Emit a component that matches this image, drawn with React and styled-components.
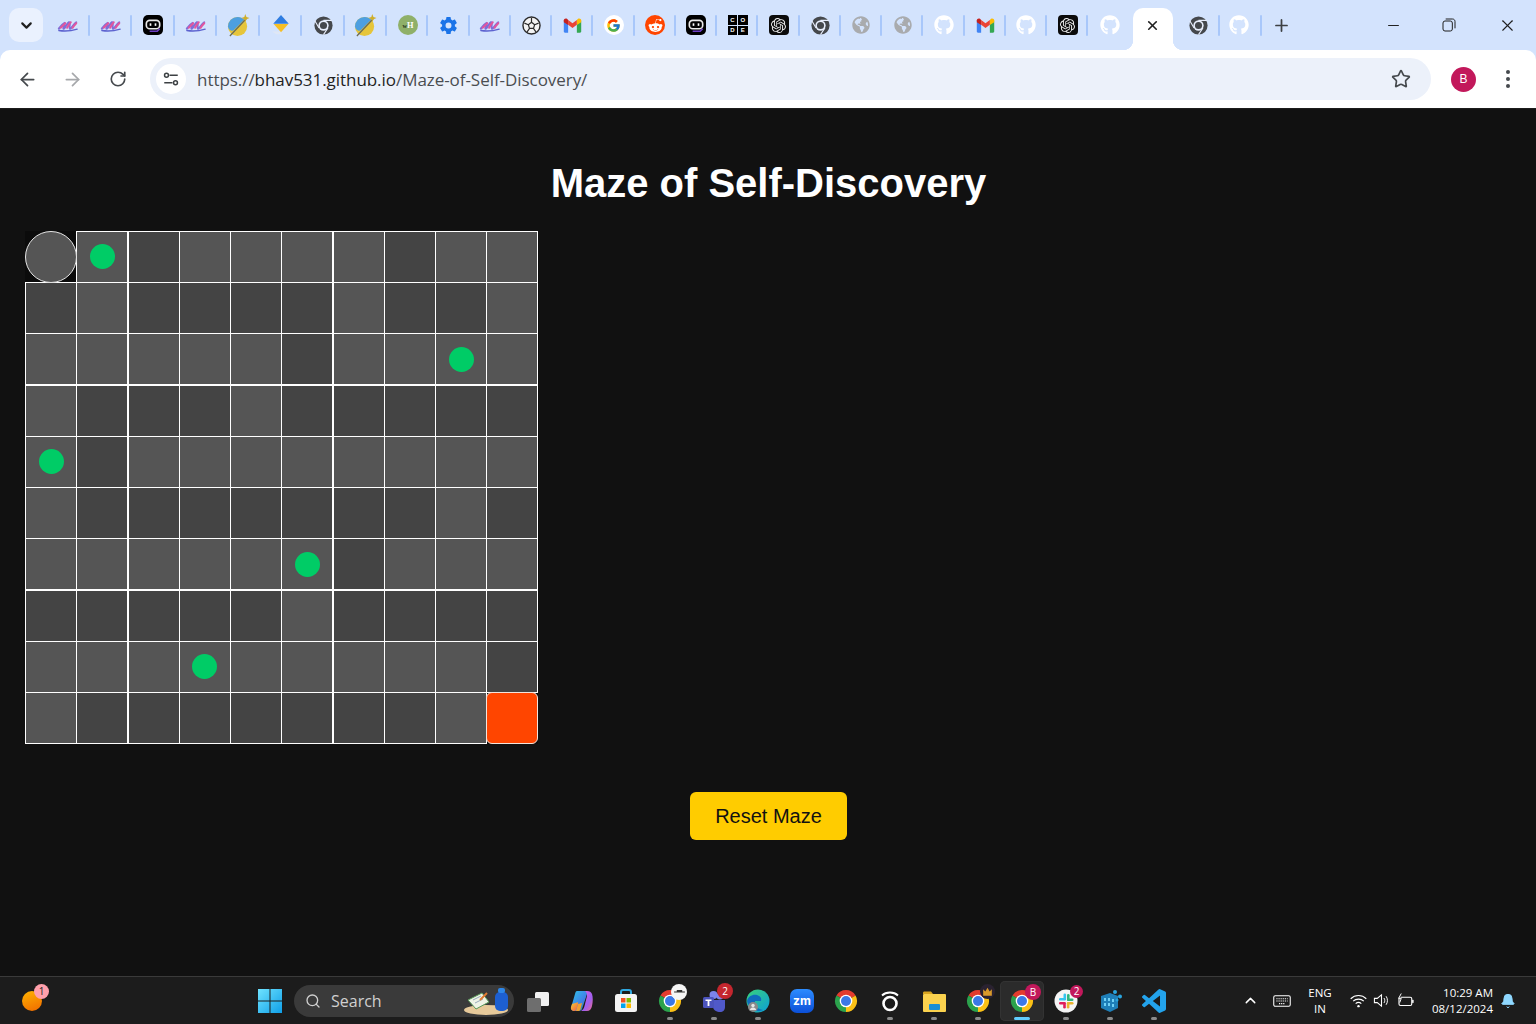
import React from "react";
import styled, { createGlobalStyle } from "styled-components";
import { ArrowLeft, ArrowRight, RotateCw, Star, Minus, X, Plus, ChevronDown, ChevronUp, Search, Bell } from "lucide-react";
import { FaGithub, FaRedditAlien, FaGlobeAmericas } from "react-icons/fa";
import { FcGoogle } from "react-icons/fc";
import { IoSettingsSharp } from "react-icons/io5";
import { SiOpenai } from "react-icons/si";

const Global = createGlobalStyle`
  html, body { margin: 0; padding: 0; background: #111; }
  body { font-family: "Liberation Sans", Arial, sans-serif; overflow: hidden; }
  * { box-sizing: border-box; }
`;

const Page = styled.div`
  width: 1536px; height: 1024px; display: flex; flex-direction: column; background: #111;
`;

/* ---------- Tab strip ---------- */
const TabStrip = styled.div`
  height: 50px; flex: none; display: flex; align-items: stretch; background: #d3e3fd; position: relative;
`;
const TabMenu = styled.div`
  width: 34px; height: 34px; margin: 8px 3px 0 9px; flex: none; border-radius: 10px; background: #eaf1fe;
  display: flex; align-items: center; justify-content: center; color: #1f1f1f;
`;
const Tab = styled.div`
  position: relative; flex: none; width: ${p => p.$w}px; height: 50px; display: flex; align-items: center;
  justify-content: center; padding-left: ${p => p.$pl ?? 2}px; padding-right: ${p => p.$pr ?? 0}px;
  ${p => p.$sep && `&::after { content: ""; position: absolute; right: -1px; top: 15px; width: 2px; height: 21px; border-radius: 1px; background: #a8c7fa; }`}
`;
const ActiveTab = styled.div`
  position: relative; flex: none; width: 40px; height: 42px; margin: 8px 4px 0 2px; background: #fff;
  border-radius: 10px 10px 0 0; display: flex; align-items: center; justify-content: center; padding: 0 1px 8px 0; color: #1f1f1f;
  &::before, &::after { content: ""; position: absolute; bottom: 0; width: 10px; height: 10px; }
  &::before { left: -10px; background: radial-gradient(circle at 0 0, #d3e3fd 10px, #fff 10.5px); }
  &::after { right: -10px; background: radial-gradient(circle at 100% 0, #d3e3fd 10px, #fff 10.5px); }
`;
const NewTab = styled.div`
  width: 42px; height: 50px; flex: none; display: flex; align-items: center; justify-content: center; color: #3d4043; padding-right: 2px;
`;
const WindowControls = styled.div`
  margin-left: auto; display: flex; color: #1f1f1f;
`;
const WinBtn = styled.div`
  width: 57px; height: 50px; display: flex; align-items: center; justify-content: center; padding-right: ${p => p.$pr || 0}px;
`;

/* ---------- Toolbar ---------- */
const Toolbar = styled.div`
  height: 59px; flex: none; display: flex; align-items: center; background: #d3e3fd;
`;
const ToolbarInner = styled.div`
  flex: 1; height: 59px; background: #fff; border-radius: 10px 10px 0 0; border-bottom: 1px solid #1c1c1c;
  display: flex; align-items: center; padding: 0 0 0 5px;
`;
const NavBtn = styled.div`
  width: 45px; height: 42px; flex: none; display: flex; align-items: center; justify-content: center;
  color: ${p => (p.$off ? "#a6a8ab" : "#45494d")};
`;
const Omnibox = styled.div`
  width: 1281px; height: 42px; margin-left: 10px; flex: none; border-radius: 21px; background: #ecf1fa; display: flex;
  align-items: center; padding: 0 20px 0 6px;
`;
const SiteInfo = styled.div`
  width: 30px; height: 30px; border-radius: 50%; background: #fff; display: flex; align-items: center; justify-content: center; flex: none;
`;
const Url = styled.div`
  margin-left: 11px; font-family: "Open Sans", "Noto Sans", sans-serif; font-size: 17px; letter-spacing: -0.05px; color: #1f1f1f; white-space: nowrap; flex: 1;
`;
const UrlDim = styled.span` color: #4a4d51; `;
const Avatar = styled.div`
  width: 25px; height: 25px; margin-left: 20px; border-radius: 50%; background: #c2185b; color: #fff; font-size: 12px;
  display: flex; align-items: center; justify-content: center; flex: none;
`;
const Kebab = styled.div`
  margin-left: 30px; display: flex; flex-direction: column; gap: 3px; flex: none;
`;
const KebabDot = styled.span`
  width: 4px; height: 4px; border-radius: 50%; background: #45494d;
`;

/* ---------- Main ---------- */
const Main = styled.main`
  flex: 1; display: flex; flex-direction: column; padding-top: 51px; background: #111;
`;
const Title = styled.h1`
  margin: 0 0 25px; text-align: center; font-size: 40px; line-height: 46px; font-weight: 700; color: #fff; padding-left: 1px;
`;
const Maze = styled.div`
  position: relative; margin-left: 25px; width: 513px; height: 513px; padding: 1px; background: #fff; display: grid;
  grid-template-columns: 50px 50px 51px 50px 50px 50px 51px 50px 50px 50px;
  grid-template-rows: 50px 50px 50px 51px 50px 50px 50px 51px 50px 50px;
  gap: 1px;
`;
const Cell = styled.div`
  background: ${p => (p.$wall ? "#444" : "#555")};
  display: flex; align-items: flex-start;
  &:nth-child(10n+3), &:nth-child(10n+7) { margin-left: 1px; }
  &:nth-child(n+31):nth-child(-n+40), &:nth-child(n+71):nth-child(-n+80) { margin-top: 1px; }
`;
const StartCell = styled.div`
  position: relative; margin: -1px 0 0 -1px; background: #0b0b0b;
`;
const Player = styled.div`
  position: absolute; left: 0; top: 0; width: 52px; height: 52px; border-radius: 50%; background: #555; border: 1px solid #e6e6e6;
`;
const GoalCell = styled.div`
  position: relative; margin: 0 -1px -1px 0; background: #0b0b0b;
`;
const Goal = styled.div`
  position: absolute; left: -1px; top: -1px; width: 52px; height: 52px; border-radius: 6px; background: #ff4500; border: 1px solid #f3e4dc;
`;
const Orb = styled.span`
  display: block; width: 25px; height: 25px; border-radius: 50%; background: #00cc66; margin: ${p => p.$dy}px 0 0 ${p => p.$dx}px;
`;
const ResetButton = styled.button`
  align-self: center; margin-top: 48px; width: 157px; height: 48px; border: none; border-radius: 6px; background: #ffcc00; color: #111;
  font-family: "Liberation Sans", Arial, sans-serif; font-size: 20px; padding: 1px 0 0; margin-left: 1px;
`;

/* ---------- Taskbar ---------- */
const Taskbar = styled.div`
  height: 48px; flex: none; background: #1c1c1c; border-top: 1px solid #3a3a3a; display: flex; align-items: center; position: relative;
`;
const Weather = styled.div`
  position: relative; width: 20px; height: 20px; margin-left: 22px; margin-right: 208px; flex: none; border-radius: 50%;
  background: linear-gradient(160deg, #ffb300, #f06a00);
`;
const Badge = styled.span`
  position: absolute; display: flex; align-items: center; justify-content: center; border-radius: 50%;
  width: ${p => p.$s || 16}px; height: ${p => p.$s || 16}px; right: ${p => p.$r ?? -2}px; top: ${p => p.$t ?? -4}px;
  background: ${p => p.$bg || "#c4262e"}; color: ${p => p.$fg || "#fff"}; font-size: 10px; line-height: 1;
  font-family: "Open Sans", sans-serif;
`;
const StartBtn = styled.div`
  width: 44px; height: 40px; flex: none; display: flex; align-items: center; justify-content: center; padding-right: 5px;
`;
const SearchBox = styled.div`
  width: 220px; height: 32px; flex: none; border-radius: 16px; background: #3a3a3a; display: flex; align-items: center; padding: 0 5px 0 11px;
  color: #d0d0d0; gap: 10px; margin-right: 2px; font-family: "Open Sans", "Noto Sans", sans-serif; font-size: 16px;
`;
const SearchLabel = styled.span` flex: 1; `;
const TaskItem = styled.div`
  position: relative; width: 44px; height: 40px; flex: none; display: flex; align-items: center; justify-content: center;
  ${p => p.$active && `background: #2b2b2b; border-radius: 5px; box-shadow: inset 0 0 0 1px #333;`}
  ${p => p.$run && `&::after { content: ""; position: absolute; bottom: 1px; left: 50%; transform: translateX(-50%); height: 3px; border-radius: 2px;
    width: ${p.$active ? 16 : 6}px; background: ${p.$active ? "#60cdff" : "#8a8a8a"}; }`}
`;
const IconWrap = styled.div`
  position: relative; width: 24px; height: 24px; display: flex; align-items: center; justify-content: center;
`;
const Tray = styled.div`
  margin-left: auto; display: flex; align-items: center; color: #fff; height: 100%;
`;
const TrayIcon = styled.div`
  display: flex; align-items: center; justify-content: center; width: ${p => p.$w}px; flex: none;
`;
const Lang = styled.div`
  width: 36px; text-align: center; margin: 0 9px 0 4px; font-family: "Open Sans", "Noto Sans", sans-serif; font-size: 11.5px; line-height: 16px; color: #fff;
`;
const Clock = styled.div`
  width: 68px; margin-left: 8px; text-align: right; font-family: "Open Sans", "Noto Sans", sans-serif; font-size: 11.5px; line-height: 16px; color: #fff; white-space: nowrap;
`;
const BellBox = styled.div`
  width: 43px; padding-right: 13px; display: flex; justify-content: center; color: #8fd8ff;
`;

/* ---------- Icons ---------- */
const Svg = ({ s = 20, v = 24, children }) => <svg width={s} height={s} viewBox={`0 0 ${v} ${v}`}>{children}</svg>;

const ArcLogo = () => (
  <Svg s={22}>
    <g fill="none" strokeWidth="2.2" strokeLinecap="round">
      <path d="M2 16c2-3 4-5 6-6 1 2-2 5-1 6s4-6 6-7 0 6 1 7 4-5 7-7" stroke="#7e6fd8" />
      <path d="M4 15c2-2 4-4 5-5M11 15c1-2 3-5 4-6M17 15c1-2 3-4 4-5" stroke="#e2569e" />
      <path d="M2 18c6 1 13 .6 20-1.500" stroke="#5c62cf" strokeWidth="1.400" />
    </g>
  </Svg>
);
const Bot = () => (
  <Svg s={20}>
    <rect x="0" y="0" width="24" height="24" rx="6" fill="#000" />
    <rect x="4" y="6.500" width="16" height="10" rx="4" fill="none" stroke="#e8e8e8" strokeWidth="2" />
    <rect x="8" y="10" width="2" height="3" fill="#fff" />
    <rect x="14" y="10" width="2" height="3" fill="#fff" />
    <path d="M8 19.500h9l3-3" fill="none" stroke="#6d3fc4" strokeWidth="2" />
  </Svg>
);
const Wand = () => (
  <Svg s={23}>
    <circle cx="11" cy="13" r="10" fill="#e6c53a" />
    <path d="M1 13A10 10 0 0 1 11 3c3 0 5 1 7 3L7 17c-2 1-5 0-6-4z" fill="#4d9fe0" />
    <path d="M3 23L20 5" stroke="#6b6b55" strokeWidth="1.300" />
    <path d="M19 0l1.300 3.200 3.200 1-3.200 1.200-1 3.300-1.200-3.300-3.200-1.200 3.200-1z" fill="#cfae2a" />
  </Svg>
);
const Gem = () => (
  <Svg s={22}>
    <path d="M12 1l8.500 9.500H3.500z" fill="#2f7de1" />
    <path d="M4 11h16l-8 9z" fill="#f6bf26" />
    <path d="M2 19l5 3h6l-2-3z" fill="#dfe7f5" />
  </Svg>
);
const ChromeMono = ({ s = 19 }) => (
  <Svg s={s}>
    <circle cx="12" cy="12" r="11.500" fill="#45484c" />
    <circle cx="12" cy="12" r="6.500" fill="#e8eefc" />
    <circle cx="12" cy="12" r="4.500" fill="#45484c" />
    <path d="M12 5.500h10.500M6.400 15.200L1 6M17.600 15.200L12 23.500" stroke="#e8eefc" strokeWidth="1.400" />
  </Svg>
);
const WH = () => (
  <Svg s={20}>
    <circle cx="12" cy="12" r="12" fill="#8fb069" />
    <text x="12" y="15.500" textAnchor="middle" fontFamily="Liberation Serif, serif" fontWeight="700" fontSize="10" fill="#22331c"><tspan fontSize="7.500">w</tspan><tspan fill="#fff">H</tspan></text>
  </Svg>
);
const Ball = () => (
  <Svg s={19}>
    <circle cx="12" cy="12" r="10.800" fill="#f4f4f4" stroke="#2b2b2b" strokeWidth="1.800" />
    <path d="M12 8l4 3-1.500 4.700h-5L8 11zM12 8V2.500M16 11l5-2M14.500 15.700l3 4.300M9.500 15.700l-3 4.300M8 11L3 9" fill="none" stroke="#2b2b2b" strokeWidth="1.500" />
  </Svg>
);
const GmailLogo = () => (
  <Svg s={19}>
    <path d="M1 6.500v13c0 .8.7 1.500 1.500 1.500H6.500V10.500z" fill="#4285f4" />
    <path d="M23 6.500v13c0 .8-.7 1.500-1.500 1.500h-4V10.500z" fill="#34a853" />
    <path d="M17.500 5v6.500L23 8V5.500c0-2-2.300-3.200-4-2z" fill="#fbbc04" />
    <path d="M6.500 11V5L12 9.200 17.500 5v6L12 15z" fill="#ea4335" />
    <path d="M1 5.500V8l5.500 3.500V5L5 3.500c-1.700-1.200-4 0-4 2z" fill="#c5221f" />
  </Svg>
);
const GoogleDisc = styled.span`
  width: 20px; height: 20px; border-radius: 50%; background: #fff; display: flex; align-items: center; justify-content: center;
`;
const GoogleLogo = () => (
  <GoogleDisc><FcGoogle size={15} /></GoogleDisc>
);
const RedditDisc = styled.span`
  width: 20px; height: 20px; border-radius: 50%; background: #ff4500; display: flex; align-items: center; justify-content: center; color: #fff;
`;
const OpenAiTile = styled.span`
  width: 20px; height: 20px; border-radius: 4px; background: #0b0b0b; display: flex; align-items: center; justify-content: center; color: #eee;
`;
const CodeTile = styled.span`
  width: 20px; height: 20px; display: grid; grid-template-columns: 1fr 1fr; gap: 1px;
`;
const CodeLetter = styled.span`
  background: #000; color: #fff; font-size: 6px; font-weight: 700; display: flex; align-items: center; justify-content: center; line-height: 1;
`;
const CodeLogo = () => (
  <CodeTile>{["C", "O", "D", "E"].map(c => <CodeLetter key={c}>{c}</CodeLetter>)}</CodeTile>
);

const tabIcon = {
  arc: <ArcLogo />,
  bot: <Bot />,
  wand: <Wand />,
  gem: <Gem />,
  chrome: <ChromeMono />,
  wh: <WH />,
  gear: <IoSettingsSharp size={19} color="#1a73e8" />,
  ball: <Ball />,
  gmail: <GmailLogo />,
  google: <GoogleLogo />,
  reddit: <RedditDisc><FaRedditAlien size={15} /></RedditDisc>,
  code: <CodeLogo />,
  openai: <OpenAiTile><SiOpenai size={15} /></OpenAiTile>,
  globe: <FaGlobeAmericas size={18} color="#a9abae" />,
  github: <FaGithub size={20} color="#fff" />,
};

const ChromeColor = ({ s = 24 }) => (
  <Svg s={s}>
    <path d="M12 12L2.470 6.500A11 11 0 0 1 21.530 6.500Z" fill="#e33b2e" />
    <path d="M12 12L21.530 6.500A11 11 0 0 1 12 23Z" fill="#fbc116" />
    <path d="M12 12L12 23A11 11 0 0 1 2.470 6.500Z" fill="#2ba24c" />
    <circle cx="12" cy="12" r="6.300" fill="#fff" />
    <circle cx="12" cy="12" r="5" fill="#3b78e7" />
  </Svg>
);
const TaskView = () => (
  <Svg s={24}>
    <rect x="9" y="3" width="14" height="14" rx="1.500" fill="#f2f2f2" />
    <rect x="1" y="9" width="14" height="14" rx="1.500" fill="#6e6e6e" />
  </Svg>
);
const Copilot = () => (
  <Svg s={24}>
    <defs>
      <linearGradient id="cpA" x1="0" y1="0" x2="1" y2="1"><stop offset="0" stopColor="#2fc6e8" /><stop offset=".6" stopColor="#3f7fe8" /><stop offset="1" stopColor="#2fa060" /></linearGradient>
      <linearGradient id="cpB" x1="0" y1="0" x2="1" y2="1"><stop offset="0" stopColor="#e05be0" /><stop offset=".6" stopColor="#a060f0" /><stop offset="1" stopColor="#f06a8a" /></linearGradient>
      <linearGradient id="cpC" x1="0" y1="0" x2="1" y2="1"><stop offset="0" stopColor="#f6d02c" /><stop offset="1" stopColor="#f0584a" /></linearGradient>
    </defs>
    <path d="M7 2h8c2 0 2.500 1.500 2 3L12 20c-.5 1.500-2 2-3 2H5c-3 0-4.500-2-3.500-5L5 5c.5-2 1-3 2-3z" fill="url(#cpA)" />
    <path d="M15 2h2c3 0 4 1 5 3 1 3 1 8 0 12-.5 3-2.500 5-5 5h-6c2-1 3-3 3.500-5L17 7c.3-2-.5-4-2-5z" fill="url(#cpB)" />
    <path d="M2 15l5-1.500c1-.5 1.500.5 1 1.500l-1.500 5c-.3 1-1 2-2 2-3 0-4-2-3.500-4z" fill="url(#cpC)" />
    <path d="M8 15l4-1-1.500 6c-.3 1-1 1.800-1.500 2H6z" fill="#f0a030" />
  </Svg>
);
const StoreIcon = () => (
  <Svg s={24}>
    <path d="M7 5V3c0-1 1-2 2-2h6c1 0 2 1 2 2v2" fill="none" stroke="#2fa8e0" strokeWidth="2" />
    <rect x="1" y="5" width="22" height="18" rx="2.500" fill="#f4f4f4" />
    <rect x="7" y="9" width="4.500" height="4.500" fill="#f25022" />
    <rect x="12.500" y="9" width="4.500" height="4.500" fill="#7fba00" />
    <rect x="7" y="14.500" width="4.500" height="4.500" fill="#00a4ef" />
    <rect x="12.500" y="14.500" width="4.500" height="4.500" fill="#ffb900" />
  </Svg>
);
const Teams = () => (
  <Svg s={24}>
    <circle cx="18" cy="7" r="3.500" fill="#7b83eb" />
    <path d="M11 11h12v7c0 3-2 5-5 5s-7-2-7-5z" fill="#5059c9" />
    <circle cx="11.500" cy="6" r="4" fill="#7b83eb" />
    <rect x="1" y="8" width="11" height="11" rx="1.500" fill="#4b53bc" />
    <path d="M3.500 10.500h6v1.500H7.400v5H5.600v-5H3.500z" fill="#fff" />
  </Svg>
);
const Edge = () => (
  <Svg s={24}>
    <defs>
      <linearGradient id="edA" x1="0" y1="0" x2="1" y2="1"><stop offset="0" stopColor="#39d27a" /><stop offset="1" stopColor="#0c9fd8" /></linearGradient>
    </defs>
    <circle cx="12" cy="12" r="11.500" fill="url(#edA)" />
    <path d="M1 12c1-5 6-7 10-6 3 1 5 3 4 6H9c-1 4 2 8 8 9-7 3-15-2-16-9z" fill="#0f6cbd" />
    <circle cx="7" cy="18" r="5" fill="#8a8a8a" />
    <circle cx="7" cy="16.500" r="1.700" fill="#e6e6e6" />
    <path d="M3.800 21c.6-2 2-2.500 3.200-2.500s2.600.5 3.200 2.500z" fill="#e6e6e6" />
  </Svg>
);
const ZoomTile = styled.span`
  width: 24px; height: 24px; border-radius: 7px; background: linear-gradient(#2d8cff, #0b4fd8); color: #fff;
  font-family: "Inter", sans-serif; font-weight: 700; font-size: 12px; display: flex; align-items: center; justify-content: center;
`;
const RingApp = () => (
  <Svg s={24}>
    <circle cx="12" cy="14.500" r="6.500" fill="none" stroke="#fff" strokeWidth="2.600" />
    <path d="M4 6.500C8 2.500 16 2.500 20 6.500" fill="none" stroke="#fff" strokeWidth="1.800" />
  </Svg>
);
const Folder = () => (
  <Svg s={24}>
    <path d="M1 4c0-1 .5-1.500 1.500-1.500H9l2 2.500H1z" fill="#d9a520" />
    <rect x="1" y="5" width="23" height="18" rx="1" fill="#fbd24e" />
    <rect x="7" y="15" width="11" height="6" rx="1" fill="#1b8fd6" />
  </Svg>
);
const Slack = () => (
  <Svg s={24}>
    <circle cx="12" cy="12" r="11.500" fill="#f5f5f5" />
    <rect x="9.500" y="4.500" width="2.600" height="7" rx="1.300" fill="#36c5f0" />
    <rect x="5" y="9" width="6" height="2.600" rx="1.300" fill="#36c5f0" />
    <rect x="13" y="5" width="2.600" height="7" rx="1.300" fill="#2eb67d" />
    <rect x="13" y="9.500" width="6.500" height="2.600" rx="1.300" fill="#2eb67d" />
    <rect x="13" y="13" width="6.500" height="2.600" rx="1.300" fill="#ecb22e" />
    <rect x="12.800" y="13" width="2.600" height="6.500" rx="1.300" fill="#ecb22e" />
    <rect x="5" y="13" width="6.500" height="2.600" rx="1.300" fill="#e01e5a" />
    <rect x="9.200" y="13" width="2.600" height="6.500" rx="1.300" fill="#e01e5a" />
  </Svg>
);
const CubeApp = () => (
  <Svg s={24}>
    <path d="M3 7l9-3 8 3v12l-8 4-9-4z" fill="#1e7fb8" />
    <path d="M6 9h2v3H6zM10 9h2v3h-2zM14 10h2v3h-2zM6 14h2v3H6zM10 14h2v3h-2zM14 15h2v3h-2z" fill="#6fd0f5" />
    <circle cx="17" cy="3" r="2" fill="#2aa6df" />
    <circle cx="22" cy="7.500" r="2" fill="#2aa6df" />
    <circle cx="19" cy="11" r="1.500" fill="#2aa6df" />
  </Svg>
);
const VsCode = () => (
  <Svg s={24}>
    <path fill="#23a3ec" d="M23.150 2.587L18.210.21a1.494 1.494 0 0 0-1.705.29l-9.460 8.630-4.120-3.128a.999.999 0 0 0-1.276.057L.327 7.261A1 1 0 0 0 .326 8.740L3.899 12 .326 15.260a1 1 0 0 0 .001 1.479L1.650 17.940a.999.999 0 0 0 1.276.057l4.120-3.128 9.460 8.630a1.492 1.492 0 0 0 1.704.29l4.942-2.377A1.500 1.500 0 0 0 24 20.060V3.939a1.500 1.500 0 0 0-.85-1.352zm-5.146 14.861L10.826 12l7.178-5.448v10.896z" />
  </Svg>
);
const Doodle = () => (
  <svg width="46" height="30" viewBox="0 0 46 30">
    <ellipse cx="23" cy="24" rx="22" ry="5" fill="#e6c99a" />
    <path d="M5 14l14-7 7 9-13 7z" fill="#eef3e6" stroke="#5a9a5a" />
    <path d="M10 14l8-4M12 17l8-4" stroke="#9ab" strokeWidth="1" />
    <path d="M17 14l7-7" stroke="#e07b30" strokeWidth="2" />
    <rect x="32" y="6" width="13" height="19" rx="5" fill="#1d5fd0" />
    <rect x="35" y="2" width="7" height="5" rx="2" fill="#2d86e8" />
  </svg>
);
const WinLogo = () => (
  <Svg s={24}>
    <defs>
      <linearGradient id="wn" x1="0" y1="0" x2="1" y2="1"><stop offset="0" stopColor="#6fe3ff" /><stop offset="1" stopColor="#0f9fe8" /></linearGradient>
    </defs>
    <path d="M0 0h11.500v11.500H0zM12.500 0H24v11.500H12.500zM0 12.500h11.500V24H0zM12.500 12.500H24V24H12.500z" fill="url(#wn)" />
  </Svg>
);

const SiteInfoIcon = () => (
  <Svg s={18}>
    <g fill="none" stroke="#3c4043" strokeWidth="2">
      <path d="M10 7h11M3 17h11" />
      <circle cx="6" cy="7" r="2.600" />
      <circle cx="18" cy="17" r="2.600" />
    </g>
  </Svg>
);
const RestoreIcon = () => (
  <Svg s={16}>
    <rect x="3" y="6" width="14" height="15" rx="3" fill="none" stroke="#1f1f1f" strokeWidth="1.500" />
    <path d="M7 3h10c3 0 4 2 4 4v10" fill="none" stroke="#1f1f1f" strokeWidth="1.500" />
  </Svg>
);
const KeyboardIcon = () => (
  <Svg s={18}>
    <rect x="1" y="5" width="22" height="14" rx="2" fill="none" stroke="#fff" strokeWidth="1.400" />
    <path d="M4.500 9h15M4.500 12h15M8 15.500h8" stroke="#fff" strokeWidth="1.500" strokeDasharray="1.600 1.200" />
  </Svg>
);
const WifiIcon = () => (
  <Svg s={17}>
    <g fill="none" stroke="#fff" strokeWidth="1.600">
      <path d="M1 9.500c6-6 16-6 22 0M4.500 13c4-4 11-4 15 0M8 16.500c2.300-2 5.700-2 8 0" />
    </g>
    <circle cx="12" cy="20" r="1.700" fill="#fff" />
  </Svg>
);
const SoundIcon = () => (
  <Svg s={17}>
    <path d="M2 9v6h4l6 5V4L6 9z" fill="none" stroke="#fff" strokeWidth="1.500" />
    <path d="M15.500 8.500c1.500 2 1.500 5 0 7M18.500 6c2.500 3.500 2.500 8.500 0 12" fill="none" stroke="#fff" strokeWidth="1.400" />
  </Svg>
);
const BatteryIcon = () => (
  <Svg s={18}>
    <rect x="4" y="7" width="17" height="11" rx="2" fill="none" stroke="#fff" strokeWidth="1.500" />
    <rect x="21.500" y="10.500" width="2" height="4" fill="#fff" />
    <path d="M7 2L3.500 8.500H7L5 14" fill="#1c1c1c" stroke="#fff" strokeWidth="1.300" />
  </Svg>
);

/* ---------- Data ---------- */
const tabs = [
  "arc", "arc", "bot", "arc", "wand", "gem", "chrome", "wand",
  "wh", "gear", "arc", "ball", "gmail", "google", "reddit", "bot", "code", "openai", "chrome", "globe", "globe", "github", "gmail", "github", "openai",
];
const layout = [
  "SLDLLLLDLL",
  "DLDDDDLDDL",
  "LLLLLDLLLL",
  "LDDDLDDDDD",
  "LDLLLLLLLL",
  "LDDDDDDDLD",
  "LLLLLLDLLL",
  "DDDDDLDDDD",
  "LLLLLLLLLD",
  "LDDDDDDDLG",
];
const orbs = { "0,1": [13, 12], "2,8": [13, 13], "4,0": [13, 12], "6,5": [13, 13], "8,3": [12, 12] };

function MiniHat() {
  return <Svg s={13}><path d="M2 12h20v2H2zM7 9h10v3H7z" fill="#333" /></Svg>;
}
function MiniCrest() {
  return <Svg s={13}><path d="M4 20V8l4 4 4-7 4 7 4-4v12z" fill="#d99a2b" /></Svg>;
}
const taskApps = [
  { k: "view", icon: <TaskView /> },
  { k: "copilot", icon: <Copilot /> },
  { k: "store", icon: <StoreIcon /> },
  { k: "c1", run: true, icon: <ChromeColor />, badge: <Badge $bg="#f5f5f5" $s={16} $r={-5} $t={-5}><MiniHat /></Badge> },
  { k: "teams", run: true, icon: <Teams />, badge: <Badge $r={-7} $t={-6}>2</Badge> },
  { k: "edge", run: true, icon: <Edge /> },
  { k: "zoom", icon: <ZoomTile>zm</ZoomTile> },
  { k: "c2", icon: <ChromeColor /> },
  { k: "ring", run: true, icon: <RingApp /> },
  { k: "folder", run: true, icon: <Folder /> },
  { k: "c3", run: true, icon: <ChromeColor />, badge: <Badge $bg="#2a2230" $fg="#e0a030" $s={15} $r={-5} $t={-5}><MiniCrest /></Badge> },
  { k: "c4", run: true, active: true, icon: <ChromeColor />, badge: <Badge $bg="#c2185b" $r={-7} $t={-5}>B</Badge> },
  { k: "slack", run: true, icon: <Slack />, badge: <Badge $bg="#c2185b" $s={13} $r={-5} $t={-4}>2</Badge> },
  { k: "cube", run: true, icon: <CubeApp /> },
  { k: "code", run: true, icon: <VsCode /> },
];

export default function App() {
  return (
    <Page>
      <Global />
      <TabStrip>
        <TabMenu><ChevronDown size={17} strokeWidth={3} /></TabMenu>
        {tabs.map((t, i) => (
          <Tab key={i} $w={i < 8 ? 42.5 : 41.25} $sep>{tabIcon[t]}</Tab>
        ))}
        <Tab $w={44}>{tabIcon.github}</Tab>
        <ActiveTab><X size={15} strokeWidth={2.6} /></ActiveTab>
        <Tab $w={42} $pl={0} $sep>{tabIcon.chrome}</Tab>
        <Tab $w={42} $pl={0} $pr={2} $sep>{tabIcon.github}</Tab>
        <NewTab><Plus size={19} strokeWidth={2.2} /></NewTab>
        <WindowControls>
          <WinBtn><Minus size={17} strokeWidth={1.4} /></WinBtn>
          <WinBtn $pr={3}><RestoreIcon /></WinBtn>
          <WinBtn><X size={19} strokeWidth={1.4} /></WinBtn>
        </WindowControls>
      </TabStrip>
      <Toolbar>
        <ToolbarInner>
          <NavBtn><ArrowLeft size={21} strokeWidth={2} /></NavBtn>
          <NavBtn $off><ArrowRight size={21} strokeWidth={2} /></NavBtn>
          <NavBtn><RotateCw size={18} strokeWidth={2.2} /></NavBtn>
          <Omnibox>
            <SiteInfo><SiteInfoIcon /></SiteInfo>
            <Url><UrlDim>https://</UrlDim>bhav531.github.io<UrlDim>/Maze-of-Self-Discovery/</UrlDim></Url>
            <Star size={20} strokeWidth={2} color="#45494d" />
          </Omnibox>
          <Avatar>B</Avatar>
          <Kebab><KebabDot /><KebabDot /><KebabDot /></Kebab>
        </ToolbarInner>
      </Toolbar>
      <Main>
        <Title>Maze of Self-Discovery</Title>
        <Maze>
          {layout.flatMap((row, r) =>
            row.split("").map((c, col) => {
              const k = `${r},${col}`;
              if (c === "S") return <StartCell key={k}><Player /></StartCell>;
              if (c === "G") return <GoalCell key={k}><Goal /></GoalCell>;
              const o = orbs[k];
              return <Cell key={k} $wall={c === "D"}>{o && <Orb $dx={o[0]} $dy={o[1]} />}</Cell>;
            })
          )}
        </Maze>
        <ResetButton>Reset Maze</ResetButton>
      </Main>
      <Taskbar>
        <Weather><Badge $bg="#ffa0ac" $fg="#222" $s={15} $r={-7} $t={-7}>1</Badge></Weather>
        <StartBtn><WinLogo /></StartBtn>
        <SearchBox>
          <Search size={16} />
          <SearchLabel>Search</SearchLabel>
          <Doodle />
        </SearchBox>
        {taskApps.map(a => (
          <TaskItem key={a.k} $run={a.run} $active={a.active}>
            <IconWrap>{a.icon}{a.badge}</IconWrap>
          </TaskItem>
        ))}
        <Tray>
          <TrayIcon $w={32}><ChevronUp size={17} strokeWidth={2} /></TrayIcon>
          <TrayIcon $w={32}><KeyboardIcon /></TrayIcon>
          <Lang>ENG<br />IN</Lang>
          <TrayIcon $w={23}><WifiIcon /></TrayIcon>
          <TrayIcon $w={23}><SoundIcon /></TrayIcon>
          <TrayIcon $w={24}><BatteryIcon /></TrayIcon>
          <Clock>10:29 AM<br />08/12/2024</Clock>
          <BellBox><Bell size={16} fill="#8fd8ff" strokeWidth={1.5} /></BellBox>
        </Tray>
      </Taskbar>
    </Page>
  );
}
